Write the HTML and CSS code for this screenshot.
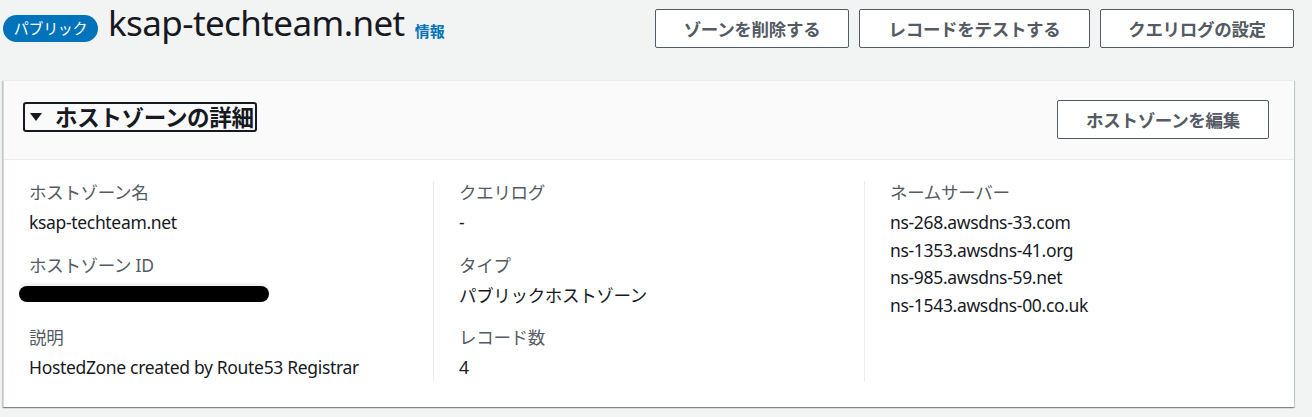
FILE: index.html
```html
<!DOCTYPE html>
<html lang="ja">
<head>
<meta charset="utf-8">
<link rel="stylesheet" href="styles.css">
</head>
<body>
<div class="page">
  <div class="top">
    <div class="title-group">
      <span class="badge">パブリック</span>
      <h1 class="title">ksap-techteam.net</h1>
      <a class="info">情報</a>
    </div>
    <div class="actions">
      <button class="btn">ゾーンを削除する</button>
      <button class="btn">レコードをテストする</button>
      <button class="btn">クエリログの設定</button>
    </div>
  </div>
  <section class="panel">
    <div class="panel-head">
      <h2 class="panel-title"><span class="caret"></span>ホストゾーンの詳細</h2>
      <button class="btn btn-edit">ホストゾーンを編集</button>
    </div>
    <div class="panel-body">
      <div class="col">
        <div class="pair">
          <div class="label">ホストゾーン名</div>
          <div class="value">ksap-techteam.net</div>
        </div>
        <div class="pair">
          <div class="label">ホストゾーン ID</div>
          <div class="value"><span class="redact"></span></div>
        </div>
        <div class="pair">
          <div class="label">説明</div>
          <div class="value">HostedZone created by Route53 Registrar</div>
        </div>
      </div>
      <div class="col">
        <div class="pair">
          <div class="label">クエリログ</div>
          <div class="value">-</div>
        </div>
        <div class="pair">
          <div class="label">タイプ</div>
          <div class="value">パブリックホストゾーン</div>
        </div>
        <div class="pair">
          <div class="label">レコード数</div>
          <div class="value">4</div>
        </div>
      </div>
      <div class="col">
        <div class="pair">
          <div class="label">ネームサーバー</div>
          <div class="value">ns-268.awsdns-33.com</div>
          <div class="value">ns-1353.awsdns-41.org</div>
          <div class="value">ns-985.awsdns-59.net</div>
          <div class="value">ns-1543.awsdns-00.co.uk</div>
        </div>
      </div>
    </div>
  </section>
</div>
</body>
</html>
```

FILE: styles.css
```css
* { box-sizing: border-box; }
html, body {
  margin: 0;
  padding: 0;
  background: #f2f3f3;
  font-family: "Noto Sans", "Noto Sans CJK JP", sans-serif;
  color: #16191f;
}
.page {
  padding: 9px 18px 10px 3px;
}
.top {
  display: flex;
  justify-content: space-between;
  align-items: flex-start;
  height: 71px;
}
.title-group {
  display: flex;
  align-items: flex-start;
}
.badge {
  display: inline-block;
  background: #0073bb;
  color: #fff;
  font-size: 15px;
  line-height: 27px;
  height: 27px;
  border-radius: 14px;
  width: 95px;
  margin-top: 6px;
  text-align: center;
  letter-spacing: -0.3px;
}
.title {
  margin: -6px 0 0 10px;
  font-size: 35px;
  font-weight: 400;
  line-height: 40px;
  letter-spacing: -0.6px;
  color: #16191f;
}
.info {
  margin-left: 10px;
  margin-top: 12px;
  font-size: 15px;
  line-height: 20px;
  font-weight: 700;
  color: #0073bb;
}
.actions {
  display: flex;
  gap: 10px;
}
.btn {
  font-family: "Noto Sans", "Noto Sans CJK JP", sans-serif;
  background: #fff;
  border: 1px solid #545b64;
  border-radius: 2px;
  color: #545b64;
  font-size: 17.5px;
  font-weight: 700;
  letter-spacing: -0.3px;
  height: 39px;
  padding: 0;
}
.actions .btn:nth-child(1) { width: 194px; }
.actions .btn:nth-child(2) { width: 231px; }
.actions .btn:nth-child(3) { width: 194px; }
.panel {
  background: #fff;
  border-left: 1px solid #d5dbdb;
  border-top: 1px solid #eaeded;
  box-shadow: 0 1px 1px 0 rgba(0,28,36,.3), 1px 1px 1px 0 rgba(0,28,36,.15), -1px 1px 1px 0 rgba(0,28,36,.15);
  width: 1291px;
}
.panel-head {
  background: #fafafa;
  border-bottom: 1px solid #eaeded;
  height: 79px;
  display: flex;
  align-items: center;
  justify-content: space-between;
  padding: 0 25px 0 19px;
}
.panel-title {
  margin: -6px 0 0 0;
  display: flex;
  align-items: center;
  font-size: 22.5px;
  font-weight: 700;
  line-height: 25px;
  letter-spacing: -0.3px;
  border: 2px solid #16191f;
  border-radius: 3px;
  padding: 0 1px 0 3px;
  height: 30px;
}
.caret {
  width: 0;
  height: 0;
  border-left: 6px solid transparent;
  border-right: 6px solid transparent;
  border-top: 8px solid #16191f;
  margin: 0 13px 0 2px;
}
.btn-edit {
  width: 212px;
  margin-top: -2px;
}
.panel-body {
  display: grid;
  grid-template-columns: 429px 431px 1fr;
  padding: 21px 0 25px;
}
.col {
  padding-left: 25px;
  display: flex;
  flex-direction: column;
  gap: 17px;
}
.col + .col {
  border-left: 1px solid #eaeded;
}
.label {
  color: #545b64;
  font-size: 17.5px;
  line-height: 22px;
  letter-spacing: -0.3px;
  margin-bottom: 6px;
}
.value {
  color: #16191f;
  font-size: 17.5px;
  line-height: 27.6px;
  letter-spacing: -0.33px;
  height: 27.6px;
}
.redact {
  display: inline-block;
  vertical-align: top;
  width: 250px;
  height: 16px;
  border-radius: 8px;
  background: #000;
  margin: 4px 0 0 -10px;
  box-shadow: 0 -3px 2px rgba(0, 0, 0, 0.06);
}
```
